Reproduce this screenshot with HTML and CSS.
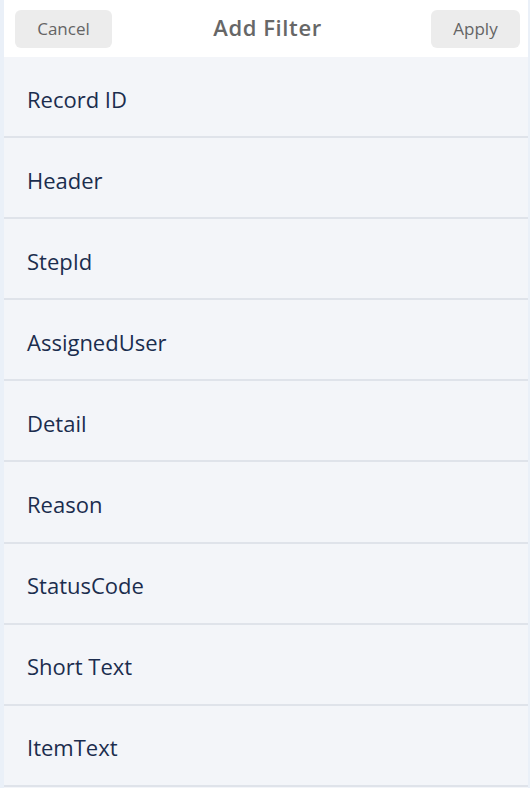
FILE: index.html
```html
<!DOCTYPE html>
<html>
<head>
<meta charset="utf-8">
<link rel="stylesheet" href="styles.css">
</head>
<body>
<div class="panel">
  <header class="bar">
    <button class="btn btn-cancel">Cancel</button>
    <h1 class="title">Add Filter</h1>
    <button class="btn btn-apply">Apply</button>
  </header>
  <ul class="list">
    <li class="row">Record ID</li>
    <li class="row">Header</li>
    <li class="row">StepId</li>
    <li class="row">AssignedUser</li>
    <li class="row">Detail</li>
    <li class="row">Reason</li>
    <li class="row">StatusCode</li>
    <li class="row">Short Text</li>
    <li class="row">ItemText</li>
  </ul>
</div>
</body>
</html>
```

FILE: styles.css
```css
html, body {
  margin: 0;
  padding: 0;
  height: 100%;
}
body {
  background: #eaf0f8;
  font-family: "Open Sans", Lato, sans-serif;
  overflow: hidden;
}
.panel {
  margin: 0 2px 0 4px;
  background: #f3f5f9;
  min-height: 100%;
}
.bar {
  height: 57px;
  background: #ffffff;
  display: flex;
  align-items: center;
  justify-content: space-between;
  padding: 0 8px 0 11px;
  box-sizing: border-box;
}
.btn {
  height: 38px;
  border: none;
  border-radius: 6px;
  background: #ececec;
  color: #646464;
  font-family: "Open Sans", Lato, sans-serif;
  font-size: 17px;
  font-weight: 500;
  padding: 0;
}
.btn-cancel {
  width: 97px;
}
.btn-apply {
  width: 89px;
}
.title {
  margin: -4px 8px 0 0;
  font-size: 22px;
  font-weight: 600;
  letter-spacing: 0.6px;
  color: #676767;
}
.list {
  list-style: none;
  margin: 0;
  padding: 0;
}
.row {
  height: 81.1px;
  box-sizing: border-box;
  border-bottom: 2px solid #dfe3ea;
  padding: 4px 0 0 23px;
  display: flex;
  align-items: center;
  font-size: 22px;
  color: #1b2d4e;
}
```
